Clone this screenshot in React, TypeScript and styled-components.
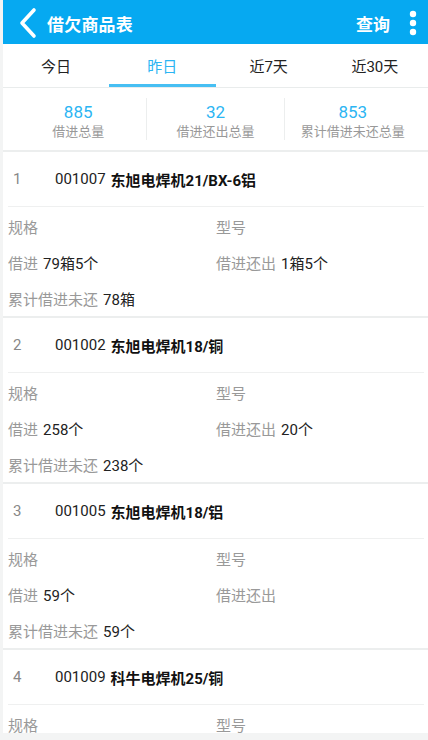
import React from 'react'
import styled, { createGlobalStyle } from 'styled-components'

const GlobalStyle = createGlobalStyle`
  html, body {
    margin: 0;
    padding: 0;
    background: #f3f4f4;
  }
  body {
    font-family: Roboto, "Noto Sans CJK SC", "Noto Sans", sans-serif;
  }
  * {
    box-sizing: border-box;
  }
`

type Item = {
  code: string
  name: string
  spec: string
  model: string
  borrowIn: string
  returned: string
  remain: string
}

const items: Item[] = [
  { code: '001007', name: '东旭电焊机21/BX-6铝', spec: '', model: '', borrowIn: '79箱5个', returned: '1箱5个', remain: '78箱' },
  { code: '001002', name: '东旭电焊机18/铜', spec: '', model: '', borrowIn: '258个', returned: '20个', remain: '238个' },
  { code: '001005', name: '东旭电焊机18/铝', spec: '', model: '', borrowIn: '59个', returned: '', remain: '59个' },
  { code: '001009', name: '科牛电焊机25/铜', spec: '', model: '', borrowIn: '', returned: '', remain: '' },
]

const tabs = ['今日', '昨日', '近7天', '近30天']

const stats = [
  { value: '885', label: '借进总量' },
  { value: '32', label: '借进还出总量' },
  { value: '853', label: '累计借进未还总量' },
]

function BackIcon() {
  return (
    <svg width="18" height="32" viewBox="0 0 18 32">
      <path d="M15 3 L3 16 L15 29" fill="none" stroke="#fff" strokeWidth="3.6" strokeLinecap="round" strokeLinejoin="round" />
    </svg>
  )
}

function MoreIcon() {
  return (
    <svg width="8" height="26" viewBox="0 0 8 26">
      <circle cx="4" cy="4" r="3.2" fill="#fff" />
      <circle cx="4" cy="13" r="3.2" fill="#fff" />
      <circle cx="4" cy="22" r="3.2" fill="#fff" />
    </svg>
  )
}

export default function App() {
  return (
    <>
      <GlobalStyle />
      <Page>
        <Header>
          <BackButton>
            <BackIcon />
          </BackButton>
          <HeaderTitle>借欠商品表</HeaderTitle>
          <HeaderAction>查询</HeaderAction>
          <MoreButton>
            <MoreIcon />
          </MoreButton>
        </Header>
        <Tabs>
          {tabs.map((t, i) => (
            <Tab key={t} active={i === 1}>{t}</Tab>
          ))}
        </Tabs>
        <Summary>
          {stats.map((s) => (
            <Stat key={s.label}>
              <StatValue>{s.value}</StatValue>
              <StatLabel>{s.label}</StatLabel>
            </Stat>
          ))}
        </Summary>
        <List>
          {items.map((it, i) => (
            <Card key={it.code}>
              <CardTitle>
                <Index>{i + 1}</Index>
                <Code>{it.code}</Code>
                <Name>{it.name}</Name>
              </CardTitle>
              <CardBody>
                <Field>
                  <FieldLabel>规格</FieldLabel>
                  <FieldValue>{it.spec}</FieldValue>
                </Field>
                <Field>
                  <FieldLabel>型号</FieldLabel>
                  <FieldValue>{it.model}</FieldValue>
                </Field>
                <Field>
                  <FieldLabel>借进</FieldLabel>
                  <FieldValue>{it.borrowIn}</FieldValue>
                </Field>
                <Field>
                  <FieldLabel>借进还出</FieldLabel>
                  <FieldValue>{it.returned}</FieldValue>
                </Field>
                <Field>
                  <FieldLabel>累计借进未还</FieldLabel>
                  <FieldValue>{it.remain}</FieldValue>
                </Field>
              </CardBody>
            </Card>
          ))}
        </List>
      </Page>
    </>
  )
}

//Styled Components

const Page = styled.div`
  display: flex;
  flex-direction: column;
  width: 425px;
  height: 733px;
  margin-left: 3px;
  overflow: hidden;
  background: #fff;
`

const Header = styled.div`
  display: flex;
  align-items: center;
  height: 44px;
  padding-top: 2px;
  background: #06a9f1;
  flex-shrink: 0;
`

const BackButton = styled.div`
  display: flex;
  align-items: center;
  margin-left: 16px;
  width: 18px;
  height: 32px;
`

const HeaderTitle = styled.span`
  margin-left: 10px;
  color: #fff;
  font-size: 17px;
  font-weight: 700;
  letter-spacing: 0.2px;
`

const HeaderAction = styled.span`
  margin-left: auto;
  color: #fff;
  font-size: 17px;
  font-weight: 700;
`

const MoreButton = styled.div`
  display: flex;
  margin-left: 19px;
  margin-right: 11px;
`

const Tabs = styled.div`
  display: flex;
  height: 44px;
  border-bottom: 1px solid #e9ecec;
  flex-shrink: 0;
`

const Tab = styled.div<{ active?: boolean }>`
  flex: 1;
  display: flex;
  align-items: center;
  justify-content: center;
  padding-top: 2px;
  font-size: 15px;
  color: ${(p) => (p.active ? '#2bb5f3' : '#222')};
  border-bottom: 3px solid ${(p) => (p.active ? '#47bff3' : 'transparent')};
`

const Summary = styled.div`
  display: flex;
  height: 64px;
  padding: 10px 7px;
  border-bottom: 2px solid #eceeee;
  flex-shrink: 0;
`

const Stat = styled.div`
  flex: 1;
  display: flex;
  flex-direction: column;
  align-items: center;
  padding-top: 4px;
  & + & {
    border-left: 1px solid #eceeee;
  }
`

const StatValue = styled.span`
  color: #2bb5f3;
  font-size: 17px;
  line-height: 21px;
`

const StatLabel = styled.span`
  color: #999;
  font-size: 13px;
  line-height: 18px;
`

const List = styled.div`
  display: flex;
  flex-direction: column;
`

const Card = styled.div`
  display: flex;
  flex-direction: column;
  flex-shrink: 0;
  border-bottom: 2px solid #eceeee;
`

const CardTitle = styled.div`
  display: flex;
  align-items: center;
  height: 55px;
  margin: 0 4px 0 5px;
  border-bottom: 1px solid #eff0f0;
  font-size: 15px;
`

const Index = styled.span`
  width: 47px;
  padding-left: 5px;
  color: #888;
`

const Code = styled.span`
  color: #222;
`

const Name = styled.span`
  margin-left: 5px;
  color: #111;
  font-weight: 700;
`

const CardBody = styled.div`
  display: grid;
  grid-template-columns: 208px 1fr;
  grid-auto-rows: 36px;
  padding: 1px 0 0 5px;
`

const Field = styled.div`
  display: flex;
  align-items: center;
  gap: 5px;
  font-size: 15px;
`

const FieldLabel = styled.span`
  color: #999;
`

const FieldValue = styled.span`
  color: #222;
`
